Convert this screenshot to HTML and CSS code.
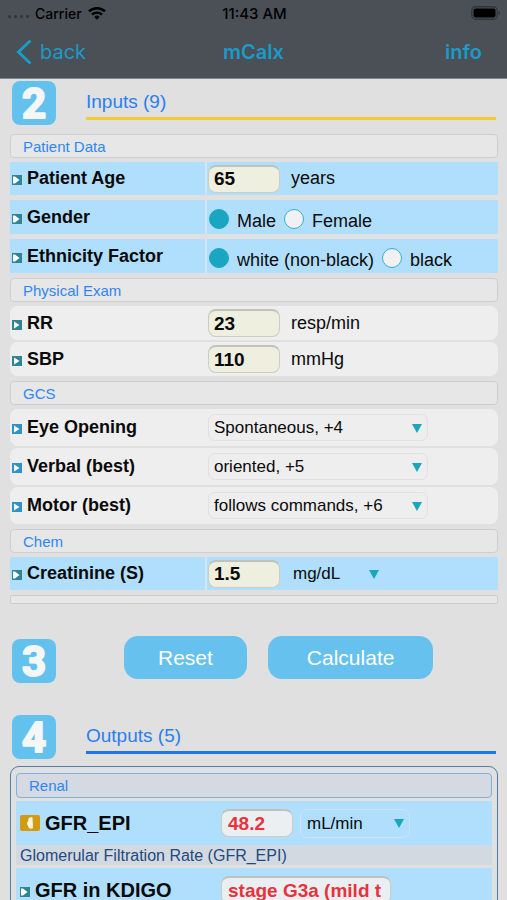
FILE: index.html
```html
<!DOCTYPE html>
<html lang="en">
<head>
<meta charset="utf-8">
<meta name="viewport" content="width=device-width, initial-scale=1">
<title>mCalx</title>
<link rel="stylesheet" href="styles.css">
</head>
<body>
<header class="top">
  <div class="status">
    <div class="carrier">
      <span class="dots"><i></i><i></i><i></i><i></i></span>
      <span>Carrier</span>
      <svg class="wifi" viewBox="0 0 18 14" width="18" height="14" aria-hidden="true">
        <path d="M1 5.4a11.5 11.5 0 0 1 16 0" fill="none" stroke="#000" stroke-width="2.5"/>
        <path d="M4 8.6a7.2 7.2 0 0 1 10 0" fill="none" stroke="#000" stroke-width="2.4"/>
        <path d="M6.3 10.9a3.9 3.9 0 0 1 5.400 0L9 13.7z"/>
      </svg>
    </div>
    <span class="clock">11:43 AM</span>
    <svg class="battery" viewBox="0 0 30 14" width="30" height="14" aria-hidden="true">
      <rect x=".75" y=".75" width="25.5" height="12.5" rx="4" fill="none" stroke="#30353a" stroke-width="1.3"/>
      <rect x="2.5" y="2.5" width="22" height="9" rx="2"/>
      <path d="M27.7 4.8c2 .8 2 3.6 0 4.4z" fill="#30353a"/>
    </svg>
  </div>
  <nav class="nav">
    <a class="back" href="#">
      <svg viewBox="0 0 16 26" width="16" height="26" aria-hidden="true"><path d="M14.5 1.5 2.5 13l12 11.5" fill="none" stroke="currentColor" stroke-width="3"/></svg>
      <span>back</span>
    </a>
    <h1>mCalx</h1>
    <a class="info" href="#">info</a>
  </nav>
</header>

<main>
  <div class="step step-inputs">
    <svg class="badge" viewBox="0 0 44 44"><text x="22" y="37">2</text></svg>
    <h2 class="yellow">Inputs (9)</h2>
  </div>

  <form class="inputs">
    <h3>Patient Data</h3>
    <div class="row blue">
      <label class="name" for="age"><svg class="mark" viewBox="0 0 10 10"><path d="M1 1.5h2L7.500 5 3 8.500H1z"/></svg>Patient Age</label>
      <div class="cell"><input class="num" id="age" value="65"><span class="unit">years</span></div>
    </div>
    <div class="row blue radio-row" role="radiogroup" aria-labelledby="gender">
      <span class="name" id="gender"><svg class="mark" viewBox="0 0 10 10"><path d="M1 1.5h2L7.500 5 3 8.500H1z"/></svg>Gender</span>
      <div class="cell options">
        <label><input type="radio" name="gender" checked><span>Male</span></label>
        <label><input type="radio" name="gender"><span>Female</span></label>
      </div>
    </div>
    <div class="row blue radio-row" role="radiogroup" aria-labelledby="ethnicity">
      <span class="name" id="ethnicity"><svg class="mark" viewBox="0 0 10 10"><path d="M1 1.5h2L7.500 5 3 8.500H1z"/></svg>Ethnicity Factor</span>
      <div class="cell options">
        <label><input type="radio" name="ethnicity" checked><span>white (non-black)</span></label>
        <label><input type="radio" name="ethnicity"><span>black</span></label>
      </div>
    </div>

    <h3>Physical Exam</h3>
    <div class="row plain">
      <label class="name" for="rr"><svg class="mark" viewBox="0 0 10 10"><path d="M2 1.5 7.5 5 2 8.5z"/></svg>RR</label>
      <div class="cell"><input class="num" id="rr" value="23"><span class="unit">resp/min</span></div>
    </div>
    <div class="row plain">
      <label class="name" for="sbp"><svg class="mark" viewBox="0 0 10 10"><path d="M2 1.5 7.5 5 2 8.5z"/></svg>SBP</label>
      <div class="cell"><input class="num" id="sbp" value="110"><span class="unit">mmHg</span></div>
    </div>

    <h3>GCS</h3>
    <div class="row plain tall">
      <label class="name" for="eye"><svg class="mark sky" viewBox="0 0 10 10"><path d="M2 1.5 7.5 5 2 8.5z"/></svg>Eye Opening</label>
      <div class="cell"><span class="pick wide"><select id="eye"><option>Spontaneous, +4</option></select></span></div>
    </div>
    <div class="row plain tall">
      <label class="name" for="verbal"><svg class="mark sky" viewBox="0 0 10 10"><path d="M2 1.5 7.5 5 2 8.5z"/></svg>Verbal (best)</label>
      <div class="cell"><span class="pick wide"><select id="verbal"><option>oriented, +5</option></select></span></div>
    </div>
    <div class="row plain tall">
      <label class="name" for="motor"><svg class="mark sky" viewBox="0 0 10 10"><path d="M2 1.5 7.5 5 2 8.5z"/></svg>Motor (best)</label>
      <div class="cell"><span class="pick wide"><select id="motor"><option>follows commands, +6</option></select></span></div>
    </div>

    <h3>Chem</h3>
    <div class="row blue">
      <label class="name" for="creat"><svg class="mark" viewBox="0 0 10 10"><path d="M1 1.5h2L7.500 5 3 8.500H1z"/></svg>Creatinine (S)</label>
      <div class="cell"><input class="num" id="creat" value="1.5"><span class="pick unit-pick faint"><select aria-label="Creatinine unit"><option>mg/dL</option></select></span></div>
    </div>
    <div class="end"></div>
  </form>

  <div class="step step-actions">
    <svg class="badge" viewBox="0 0 44 44"><text x="22" y="37">3</text></svg>
    <div class="actions">
      <button type="button" class="reset">Reset</button>
      <button type="button" class="calc">Calculate</button>
    </div>
  </div>

  <div class="step step-outputs">
    <svg class="badge" viewBox="0 0 44 44"><text x="22" y="37">4</text></svg>
    <h2>Outputs (5)</h2>
  </div>

  <section class="outputs">
    <h3>Renal</h3>
    <div class="out">
      <label class="name" for="gfr"><svg class="tag" viewBox="0 0 20 16" width="20" height="16"><rect width="20" height="16" rx="2" fill="#d29b14"/><path d="M12.500 2.500C9.500 1.800 7.800 3.500 8.300 6C6.600 7 6.600 9.500 8 10.500C8 13.500 10.500 14.200 13 13.200z" fill="#fff8dd"/></svg>GFR_EPI</label>
      <input class="num result" id="gfr" value="48.2" readonly>
      <span class="pick unit-pick"><select aria-label="GFR unit"><option>mL/min</option></select></span>
    </div>
    <p>Glomerular Filtration Rate (GFR_EPI)</p>
    <div class="out">
      <label class="name" for="kdigo"><svg class="mark" viewBox="0 0 10 10"><path d="M1 1.5h2L7.500 5 3 8.500H1z"/></svg>GFR in KDIGO</label>
      <input class="num result long" id="kdigo" value="stage G3a (mild t" readonly>
    </div>
  </section>
</main>
</body>
</html>
```
FILE: styles.css
```css
* { box-sizing: border-box; }

body {
  margin: 0;
  height: 100vh;
  display: flex;
  flex-direction: column;
  background: #e0e0e0;
  color: #0a0a0a;
  font-family: "Liberation Sans", Arial, sans-serif;
  font-size: 18px;
}

h1, h2, h3, p { margin: 0; font-weight: 400; }

input, select, button { font-family: inherit; margin: 0; }

/* Top bar */
.top {
  flex: none;
  background: #4a5056;
  border-bottom: 1px solid #80868b;
  font-family: Inter, sans-serif;
}

.status {
  display: grid;
  grid-template-columns: 1fr auto 1fr;
  align-items: center;
  height: 26px;
  padding: 0 6px 0 8px;
  color: #000;
  font-size: 14px;
  font-weight: 500;
}

.clock { font-size: 15px; }
.carrier { display: flex; align-items: center; gap: 6px; }
.dots { display: flex; gap: 3px; padding-top: 6px; }
.dots i { width: 3px; height: 3px; border-radius: 50%; background: #30353a; }
.battery { justify-self: end; }

.nav {
  display: grid;
  grid-template-columns: 1fr auto 1fr;
  align-items: center;
  height: 52px;
  padding: 0 16px;
  color: #1a9bc9;
  font-size: 20px;
}

.nav h1 { font-size: 20px; font-weight: 600; }
.nav a { color: inherit; text-decoration: none; }
.back { display: flex; align-items: center; gap: 8px; }
.nav .info { justify-self: end; margin-right: 9px; font-weight: 600; }

main { flex: 1; min-height: 0; overflow: hidden; }

/* Numbered steps */
.step { display: flex; padding: 0 11px 0 12px; }
.step-inputs { padding-top: 2px; }
.step-actions { padding-top: 32px; }
.step-outputs { padding-top: 32px; }

.badge {
  flex: none;
  width: 44px;
  height: 44px;
  border-radius: 8px;
  background: #63c1ee;
}

.badge text {
  fill: #f4f6f8;
  stroke: #f4f6f8;
  stroke-width: 2px;
  stroke-linejoin: round;
  font: 700 42px Roboto, sans-serif;
  text-anchor: middle;
}

.step h2 {
  flex: 1;
  height: 39px;
  margin-left: 30px;
  border-bottom: 3px solid #1c78ea;
  color: #2a7ff0;
  font-size: 19px;
  line-height: 41px;
}

.step h2.yellow { border-color: #f2cb35; }

.actions { display: flex; gap: 21px; margin-left: 68px; }
.step-actions .badge { margin-top: 3px; }

.actions button {
  height: 43px;
  padding: 0 34px;
  border: 0;
  border-radius: 14px;
  background: #66c1ee;
  color: #fff;
  font-size: 21px;
}

.actions .calc { padding: 0 39px; }

/* Input groups */
.inputs { padding: 9px 9px 0 10px; }

h3 {
  height: 24px;
  padding-left: 12px;
  border: 1px solid #cecece;
  border-radius: 4px;
  background: #e7e7e7;
  color: #2e86f5;
  font-size: 15px;
  line-height: 23px;
}

.row + h3 { margin-top: 5px; }

.row { display: grid; grid-template-columns: 195px 1fr; height: 34px; margin-top: 4px; }
.row + .row { margin-top: 2px; }

.row.blue { height: 33px; }
.row.blue .name, .row.blue .cell { background: #b0dffe; }
.row.blue .cell { padding-left: 1px; border-left: 2px solid #cfe7f6; }
.row.plain { border-radius: 8px; background: #eeeeee; }
.row.tall { height: 37px; }
.row.radio-row { height: 34px; margin-top: 5px; }

.name { display: flex; align-items: center; padding-left: 2px; font-weight: 700; }

.mark {
  flex: none;
  width: 10px;
  height: 10px;
  margin: 3px 5px 0 0;
  background: #2f8592;
  fill: #fff;
}

.mark.sky { background: #2e93c9; }

.cell { display: flex; align-items: center; padding-left: 3px; }

.num {
  width: 72px;
  height: 28px;
  padding: 0 5px;
  border: 1px solid #c9cdc4;
  border-top: 2px solid #bfc3ba;
  border-radius: 8px;
  background: #eeefdf;
  color: #0a0a0a;
  font-size: 19px;
  font-weight: 700;
}

.unit { margin-left: 11px; }

.row .options { gap: 7px; padding-top: 4px; }
.options label { display: flex; align-items: center; gap: 8px; }
.options label span { padding-top: 5px; }

input[type="radio"] {
  appearance: none;
  width: 20px;
  height: 20px;
  margin-left: 1px;
  border: 1px solid #35b0cc;
  border-radius: 50%;
  background: #f1f1f3;
}

input[type="radio"]:checked { background: #1aa6c0; border-color: #1aa6c0; }

/* Drop-downs */
.pick { position: relative; display: inline-flex; }

.pick::after {
  content: "";
  position: absolute;
  right: 6px;
  top: 10px;
  border: 5px solid transparent;
  border-top: 9px solid #1aa6bd;
  border-bottom: 0;
  pointer-events: none;
}

.pick select {
  appearance: none;
  width: 100%;
  height: 27px;
  padding: 0 5px;
  border: 1px solid #e1e1e3;
  border-radius: 7px;
  background: transparent;
  color: #0a0a0a;
  font-size: 17px;
}

.wide { width: 220px; }
.unit-pick { width: 110px; margin-left: 7px; }
.faint { width: 98px; }
.faint select { border-color: #b9dcf2; }

.end { height: 9px; margin-top: 5px; border: 1px solid #cecece; border-radius: 2px; background: #e7e7e7; }

/* Results */
.outputs {
  margin: 7px 9px 0 10px;
  padding: 6px 5px 0;
  border: 1px solid #4f7da6;
  border-radius: 9px;
}

.outputs h3 { height: 25px; border-color: #7fb4dc; background: #d5d9e1; }

.out {
  display: grid;
  grid-template-columns: 201px auto 1fr;
  align-items: center;
  height: 44px;
  margin-top: 3px;
  padding-left: 4px;
  background: #b0dffe;
}

.out .name { padding: 0; font-size: 20px; }
.tag { flex: none; margin-right: 5px; }
.num.result { padding: 0 6px; background: #ebeff2; color: #e8323c; }
.num.long { width: 170px; }
.out .pick select { height: 29px; padding: 0 6px; border-color: #d3e0f4; }

.outputs p {
  height: 20px;
  padding-left: 4px;
  background: #d3d9e1;
  color: #1f4a80;
  font-size: 16px;
  line-height: 21px;
}
```
